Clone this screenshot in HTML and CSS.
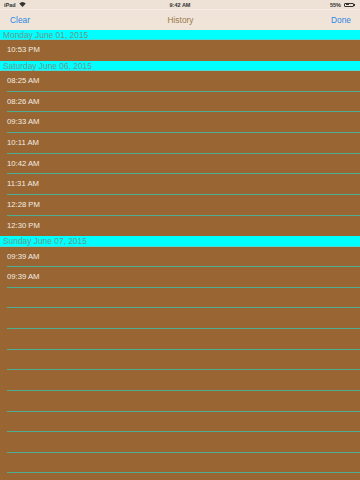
FILE: index.html
```html
<!DOCTYPE html>
<html lang="en">
<head>
    <meta charset="UTF-8">
    <meta name="viewport" content="width=device-width, initial-scale=1.0">
    <title>History</title>
    <link rel="stylesheet" href="styles.css">
</head>
<body>
    <div class="status-bar">
        <div class="status-left">
            iPad
            <svg class="wifi" width="7" height="5" viewBox="0 0 14 10">
                <path d="M7 10 L0.5 3.2 A9.5 9.5 0 0 1 13.5 3.2 Z" fill="#333"/>
            </svg>
        </div>
        <div class="status-time">9:42 AM</div>
        <div class="status-right">
            55%
            <span class="battery"><span class="battery-level"></span></span>
        </div>
    </div>

    <div class="nav-bar">
        <span class="nav-btn">Clear</span>
        <span class="nav-title">History</span>
        <span class="nav-btn">Done</span>
    </div>

    <div class="table">
        <div class="section-header">Monday June 01, 2015</div>
        <div class="row last">10:53 PM</div>

        <div class="section-header">Saturday June 06, 2015</div>
        <div class="row">08:25 AM</div>
        <div class="row">08:26 AM</div>
        <div class="row">09:33 AM</div>
        <div class="row">10:11 AM</div>
        <div class="row">10:42 AM</div>
        <div class="row">11:31 AM</div>
        <div class="row">12:28 PM</div>
        <div class="row last">12:30 PM</div>

        <div class="section-header">Sunday June 07, 2015</div>
        <div class="row">09:39 AM</div>
        <div class="row">09:39 AM</div>

        <!-- empty filler rows of the plain table -->
        <div class="row"></div>
        <div class="row"></div>
        <div class="row"></div>
        <div class="row"></div>
        <div class="row"></div>
        <div class="row"></div>
        <div class="row"></div>
        <div class="row"></div>
        <div class="row"></div>
    </div>
</body>
</html>
```

FILE: styles.css
```css
body {
    margin: 0;
    font-family: 'Liberation Sans', Arial, sans-serif;
    background: #996633;
    width: 360px;
    height: 480px;
    overflow: hidden;
}
.status-bar {
    height: 9.4px;
    background: #ede2d5;
    display: flex;
    align-items: center;
    justify-content: space-between;
    padding: 0 4px;
    font-size: 5.5px;
    font-weight: bold;
    color: #333;
    position: relative;
}
.status-left, .status-right {
    display: flex;
    align-items: center;
    gap: 3px;
}
.status-time {
    position: absolute;
    left: 0;
    right: 0;
    text-align: center;
}
.battery {
    display: inline-block;
    width: 10px;
    height: 4px;
    border: 0.7px solid #333;
    border-radius: 1px;
    padding: 0.5px;
    box-sizing: border-box;
    position: relative;
    margin-right: 2px;
}
.battery::after {
    content: '';
    position: absolute;
    right: -2px;
    top: 0.8px;
    width: 1px;
    height: 1.6px;
    background: #333;
}
.battery-level {
    display: block;
    width: 55%;
    height: 100%;
    background: #333;
}
.nav-bar {
    height: 20.6px;
    background: #efe4d7;
    display: flex;
    align-items: center;
    justify-content: space-between;
    padding: 0 9px 1px 10px;
    border-top: 0.5px solid #f5ede3;
    box-sizing: border-box;
}
.nav-btn {
    color: #2f84e6;
    font-size: 8.4px;
}
.nav-title {
    color: #a0784f;
    font-size: 8.4px;
}
.section-header {
    height: 10.31px;
    line-height: 10.31px;
    background: #00ffff;
    color: #66998c;
    font-size: 8.4px;
    padding-left: 3px;
    box-sizing: border-box;
    box-shadow: inset 0 -0.5px 0 #8cb8b0;
}
.row {
    height: 20.625px;
    line-height: 20px;
    padding-left: 7px;
    color: #f3ece4;
    font-size: 7.7px;
    position: relative;
    box-sizing: border-box;
}
.row::after {
    content: '';
    position: absolute;
    left: 7px;
    right: 0;
    bottom: 0;
    height: 1px;
    background: #4fae92;
}
.row.last::after {
    display: none;
}
```
